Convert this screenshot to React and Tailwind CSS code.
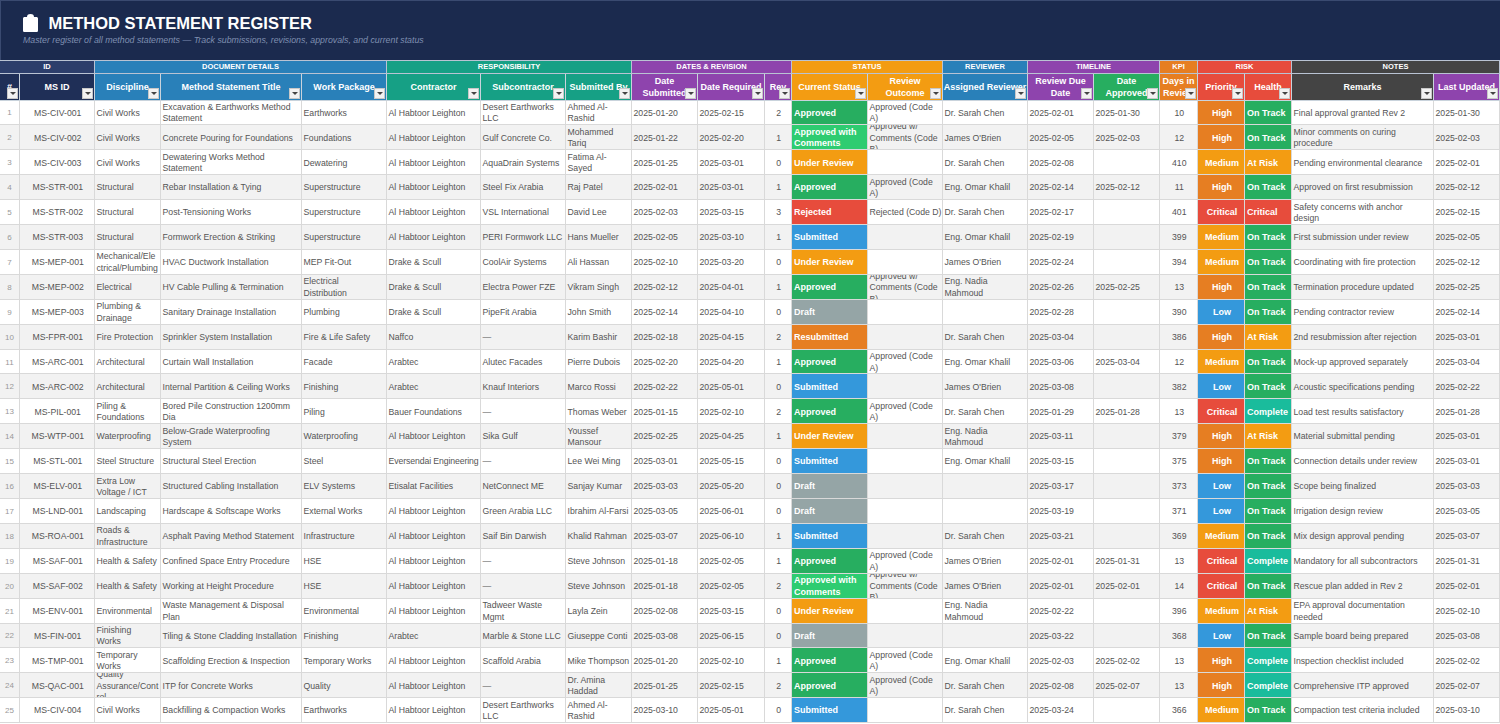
import React from "react";

const AH = "Al Habtoor Leighton";
const A = "Approved (Code A)";
const B = "Approved w/ Comments (Code B)";

const groups = [
  ["ID", "col-span-2 bg-[#2c3e6b]"],
  ["DOCUMENT DETAILS", "col-span-3 bg-[#2980b9]"],
  ["RESPONSIBILITY", "col-span-3 bg-[#16a085]"],
  ["DATES & REVISION", "col-span-3 bg-[#8e44ad]"],
  ["STATUS", "col-span-2 bg-[#f39c12]"],
  ["REVIEWER", "col-span-1 bg-[#2980b9]"],
  ["TIMELINE", "col-span-2 bg-[#8e44ad]"],
  ["KPI", "col-span-1 bg-[#e67e22]"],
  ["RISK", "col-span-2 bg-[#e74c3c]"],
  ["NOTES", "col-span-2 bg-[#444444]"],
];

const headers = [
  ["#", "bg-[#1f2f57]"],
  ["MS ID", "bg-[#1f2f57]"],
  ["Discipline", "bg-[#2980b9]"],
  ["Method Statement Title", "bg-[#2980b9]"],
  ["Work Package", "bg-[#2980b9]"],
  ["Contractor", "bg-[#16a085]"],
  ["Subcontractor", "bg-[#16a085]"],
  ["Submitted By", "bg-[#16a085]"],
  ["Date Submitted", "bg-[#8e44ad]"],
  ["Date Required", "bg-[#8e44ad]"],
  ["Rev", "bg-[#8e44ad]"],
  ["Current Status", "bg-[#f39c12]"],
  ["Review\nOutcome", "bg-[#f39c12]"],
  ["Assigned Reviewer", "bg-[#2980b9]"],
  ["Review Due Date", "bg-[#8e44ad]"],
  ["Date\nApproved", "bg-[#27ae60]"],
  ["Days in Review", "bg-[#e67e22]"],
  ["Priority", "bg-[#e74c3c]"],
  ["Health", "bg-[#e74c3c]"],
  ["Remarks", "bg-[#444444]"],
  ["Last Updated", "bg-[#8e44ad]"],
];

const fills = {
  Approved: "bg-[#27ae60]",
  "Approved with Comments": "bg-[#2ecc71]",
  "Under Review": "bg-[#f39c12]",
  Rejected: "bg-[#e74c3c]",
  Submitted: "bg-[#3498db]",
  Draft: "bg-[#95a5a6]",
  Resubmitted: "bg-[#e67e22]",
  Critical: "bg-[#e74c3c]",
  High: "bg-[#e67e22]",
  Medium: "bg-[#f39c12]",
  Low: "bg-[#3498db]",
  "On Track": "bg-[#27ae60]",
  "At Risk": "bg-[#f39c12]",
  Complete: "bg-[#1abc9c]",
};

const rows = [
  ["MS-CIV-001", "Civil Works", "Excavation & Earthworks Method Statement", "Earthworks", AH, "Desert Earthworks LLC", "Ahmed Al-Rashid", "2025-01-20", "2025-02-15", "2", "Approved", A, "Dr. Sarah Chen", "2025-02-01", "2025-01-30", "10", "High", "On Track", "Final approval granted Rev 2", "2025-01-30"],
  ["MS-CIV-002", "Civil Works", "Concrete Pouring for Foundations", "Foundations", AH, "Gulf Concrete Co.", "Mohammed Tariq", "2025-01-22", "2025-02-20", "1", "Approved with Comments", B, "James O'Brien", "2025-02-05", "2025-02-03", "12", "High", "On Track", "Minor comments on curing procedure", "2025-02-03"],
  ["MS-CIV-003", "Civil Works", "Dewatering Works Method Statement", "Dewatering", AH, "AquaDrain Systems", "Fatima Al-Sayed", "2025-01-25", "2025-03-01", "0", "Under Review", "", "Dr. Sarah Chen", "2025-02-08", "", "410", "Medium", "At Risk", "Pending environmental clearance", "2025-02-01"],
  ["MS-STR-001", "Structural", "Rebar Installation & Tying", "Superstructure", AH, "Steel Fix Arabia", "Raj Patel", "2025-02-01", "2025-03-01", "1", "Approved", A, "Eng. Omar Khalil", "2025-02-14", "2025-02-12", "11", "High", "On Track", "Approved on first resubmission", "2025-02-12"],
  ["MS-STR-002", "Structural", "Post-Tensioning Works", "Superstructure", AH, "VSL International", "David Lee", "2025-02-03", "2025-03-15", "3", "Rejected", "Rejected (Code D)", "Dr. Sarah Chen", "2025-02-17", "", "401", "Critical", "Critical", "Safety concerns with anchor\ndesign", "2025-02-15"],
  ["MS-STR-003", "Structural", "Formwork Erection & Striking", "Superstructure", AH, "PERI Formwork LLC", "Hans Mueller", "2025-02-05", "2025-03-10", "1", "Submitted", "", "Eng. Omar Khalil", "2025-02-19", "", "399", "Medium", "On Track", "First submission under review", "2025-02-05"],
  ["MS-MEP-001", "Mechanical/Ele\nctrical/Plumbing", "HVAC Ductwork Installation", "MEP Fit-Out", "Drake & Scull", "CoolAir Systems", "Ali Hassan", "2025-02-10", "2025-03-20", "0", "Under Review", "", "James O'Brien", "2025-02-24", "", "394", "Medium", "On Track", "Coordinating with fire protection", "2025-02-12"],
  ["MS-MEP-002", "Electrical", "HV Cable Pulling & Termination", "Electrical\nDistribution", "Drake & Scull", "Electra Power FZE", "Vikram Singh", "2025-02-12", "2025-04-01", "1", "Approved", B, "Eng. Nadia Mahmoud", "2025-02-26", "2025-02-25", "13", "High", "On Track", "Termination procedure updated", "2025-02-25"],
  ["MS-MEP-003", "Plumbing & Drainage", "Sanitary Drainage Installation", "Plumbing", "Drake & Scull", "PipeFit Arabia", "John Smith", "2025-02-14", "2025-04-10", "0", "Draft", "", "", "2025-02-28", "", "390", "Low", "On Track", "Pending contractor review", "2025-02-14"],
  ["MS-FPR-001", "Fire Protection", "Sprinkler System Installation", "Fire & Life Safety", "Naffco", "—", "Karim Bashir", "2025-02-18", "2025-04-15", "2", "Resubmitted", "", "Dr. Sarah Chen", "2025-03-04", "", "386", "High", "At Risk", "2nd resubmission after rejection", "2025-03-01"],
  ["MS-ARC-001", "Architectural", "Curtain Wall Installation", "Facade", "Arabtec", "Alutec Facades", "Pierre Dubois", "2025-02-20", "2025-04-20", "1", "Approved", A, "Eng. Omar Khalil", "2025-03-06", "2025-03-04", "12", "Medium", "On Track", "Mock-up approved separately", "2025-03-04"],
  ["MS-ARC-002", "Architectural", "Internal Partition & Ceiling Works", "Finishing", "Arabtec", "Knauf Interiors", "Marco Rossi", "2025-02-22", "2025-05-01", "0", "Submitted", "", "James O'Brien", "2025-03-08", "", "382", "Low", "On Track", "Acoustic specifications pending", "2025-02-22"],
  ["MS-PIL-001", "Piling & Foundations", "Bored Pile Construction 1200mm Dia", "Piling", "Bauer Foundations", "—", "Thomas Weber", "2025-01-15", "2025-02-10", "2", "Approved", A, "Dr. Sarah Chen", "2025-01-29", "2025-01-28", "13", "Critical", "Complete", "Load test results satisfactory", "2025-01-28"],
  ["MS-WTP-001", "Waterproofing", "Below-Grade Waterproofing System", "Waterproofing", AH, "Sika Gulf", "Youssef Mansour", "2025-02-25", "2025-04-25", "1", "Under Review", "", "Eng. Nadia Mahmoud", "2025-03-11", "", "379", "High", "At Risk", "Material submittal pending", "2025-03-01"],
  ["MS-STL-001", "Steel Structure", "Structural Steel Erection", "Steel", "Eversendai\u00a0Engineering", "—", "Lee Wei Ming", "2025-03-01", "2025-05-15", "0", "Submitted", "", "Eng. Omar Khalil", "2025-03-15", "", "375", "High", "On Track", "Connection details under review", "2025-03-01"],
  ["MS-ELV-001", "Extra Low Voltage / ICT", "Structured Cabling Installation", "ELV Systems", "Etisalat Facilities", "NetConnect ME", "Sanjay Kumar", "2025-03-03", "2025-05-20", "0", "Draft", "", "", "2025-03-17", "", "373", "Low", "On Track", "Scope being finalized", "2025-03-03"],
  ["MS-LND-001", "Landscaping", "Hardscape & Softscape Works", "External Works", AH, "Green Arabia LLC", "Ibrahim Al-Farsi", "2025-03-05", "2025-06-01", "0", "Draft", "", "", "2025-03-19", "", "371", "Low", "On Track", "Irrigation design review", "2025-03-05"],
  ["MS-ROA-001", "Roads & Infrastructure", "Asphalt Paving Method Statement", "Infrastructure", AH, "Saif Bin Darwish", "Khalid Rahman", "2025-03-07", "2025-06-10", "1", "Submitted", "", "Dr. Sarah Chen", "2025-03-21", "", "369", "Medium", "On Track", "Mix design approval pending", "2025-03-07"],
  ["MS-SAF-001", "Health & Safety", "Confined Space Entry Procedure", "HSE", AH, "—", "Steve Johnson", "2025-01-18", "2025-02-05", "1", "Approved", A, "James O'Brien", "2025-02-01", "2025-01-31", "13", "Critical", "Complete", "Mandatory for all subcontractors", "2025-01-31"],
  ["MS-SAF-002", "Health & Safety", "Working at Height Procedure", "HSE", AH, "—", "Steve Johnson", "2025-01-18", "2025-02-05", "2", "Approved with Comments", B, "James O'Brien", "2025-02-01", "2025-02-01", "14", "Critical", "On Track", "Rescue plan added in Rev 2", "2025-02-01"],
  ["MS-ENV-001", "Environmental", "Waste Management & Disposal Plan", "Environmental", AH, "Tadweer Waste Mgmt", "Layla Zein", "2025-02-08", "2025-03-15", "0", "Under Review", "", "Eng. Nadia Mahmoud", "2025-02-22", "", "396", "Medium", "At Risk", "EPA approval documentation needed", "2025-02-10"],
  ["MS-FIN-001", "Finishing\nWorks", "Tiling & Stone Cladding Installation", "Finishing", "Arabtec", "Marble & Stone LLC", "Giuseppe Conti", "2025-03-08", "2025-06-15", "0", "Draft", "", "", "2025-03-22", "", "368", "Low", "On Track", "Sample board being prepared", "2025-03-08"],
  ["MS-TMP-001", "Temporary Works", "Scaffolding Erection & Inspection", "Temporary Works", AH, "Scaffold Arabia", "Mike Thompson", "2025-01-20", "2025-02-10", "1", "Approved", A, "Eng. Omar Khalil", "2025-02-03", "2025-02-02", "13", "High", "Complete", "Inspection checklist included", "2025-02-02"],
  ["MS-QAC-001", "Quality Assurance/Control", "ITP for Concrete Works", "Quality", AH, "—", "Dr. Amina Haddad", "2025-01-25", "2025-02-15", "2", "Approved", A, "Dr. Sarah Chen", "2025-02-08", "2025-02-07", "13", "High", "Complete", "Comprehensive ITP approved", "2025-02-07"],
  ["MS-CIV-004", "Civil Works", "Backfilling & Compaction Works", "Earthworks", AH, "Desert Earthworks LLC", "Ahmed Al-Rashid", "2025-03-10", "2025-05-01", "0", "Submitted", "", "Dr. Sarah Chen", "2025-03-24", "", "366", "Medium", "On Track", "Compaction test criteria included", "2025-03-10"],
];

// column index in a row (without the # cell)
const CENTERED = [0, 9, 15];
const STATUS = 10;
const PRIORITY = 16;
const HEALTH = 17;

const FilterButton = () => (
  <span className="absolute right-[1px] bottom-[1px] w-[11px] h-[11px] bg-[#f2f2f2] border border-[#c8c8c8] flex items-center justify-center">
    <svg width="6" height="3" viewBox="0 0 6 3">
      <path d="M0 0h6L3 3z" fill="#444444" />
    </svg>
  </span>
);

const Cell = ({ value, col, odd }) => {
  const filled = col === STATUS || col === PRIORITY || col === HEALTH;
  if (filled) {
    return (
      <div className={`flex items-center overflow-hidden border-r border-b border-[#d9d9d9] pl-[2px] pt-[2px] font-bold text-white leading-[11.5px] text-[9px] ${fills[value]} ${col === PRIORITY ? "justify-center text-center pl-0" : ""}`}>
        <span>{value}</span>
      </div>
    );
  }
  return (
    <div className={`flex items-center overflow-hidden border-r border-b border-[#d9d9d9] pl-[1.5px] pt-[2px] text-[#555555] leading-[11.5px] text-[8.7px] whitespace-pre-line [overflow-wrap:anywhere] ${odd ? "bg-white" : "bg-[#f2f2f2]"} ${CENTERED.includes(col) ? "justify-center text-center" : ""} ${value.includes("\u00a0") ? "tracking-[-0.1px]" : ""}`}>
      <span>{value}</span>
    </div>
  );
};

const App = () => {
  return (
    <div className="h-[724px] w-[1500px] overflow-hidden bg-white font-['Liberation_Sans',Arial,sans-serif]">
      {/* Title banner */}
      <div className="h-[60px] bg-[#1b2a4e] pl-[22px] pt-[11px] border-t border-l border-[#3a4a70]">
        <div className="flex items-center gap-[10.5px] h-[22px]">
          <svg width="15" height="18" viewBox="0 0 15 18">
            <path d="M4 3C4 1 5 0 7.500 0S11 1 11 3h2.400C14.300 3 15 3.700 15 4.600v11.800c0 .9-.7 1.600-1.600 1.600H1.600C.7 18 0 17.300 0 16.400V4.600C0 3.700.7 3 1.600 3z" fill="#ffffff" />
          </svg>
          <h1 className="text-[16.5px] leading-[22px] font-bold text-white">METHOD STATEMENT REGISTER</h1>
        </div>
        <p className="text-[8.8px] leading-[12px] italic text-[#7f8fb0]">
          Master register of all method statements — Track submissions, revisions, approvals, and current status
        </p>
      </div>

      {/* Register sheet */}
      <div className="grid grid-cols-[20px_75px_66px_141px_85px_94px_85px_66px_66px_67px_27px_76px_75px_85px_66px_66px_38px_47px_47px_142px_66px] grid-rows-[13.5px_27px_repeat(25,24.92px)]">
        {groups.map(([label, cls]) => (
          <div key={label} className={`flex items-center justify-center overflow-hidden border-r border-t border-b border-[#b9c3d3] text-white font-bold text-[7.5px] leading-none ${cls}`}>
            {label}
          </div>
        ))}
        {headers.map(([label, cls]) => (
          <div key={label} className={`relative flex items-center justify-center overflow-hidden border-r border-b border-[#c9d3dc] pt-[2px] text-center font-bold text-white text-[9px] leading-[11.5px] whitespace-pre-line ${cls}`}>
            <span className="break-words">{label}</span>
            <FilterButton />
          </div>
        ))}
        {rows.map((row, i) => (
          <React.Fragment key={row[0]}>
            <div className={`flex items-center justify-center border-r border-b border-[#d9d9d9] pt-[2px] text-[#999999] text-[8px] ${i % 2 === 0 ? "bg-white" : "bg-[#f2f2f2]"}`}>
              {i + 1}
            </div>
            {row.map((value, col) => (
              <Cell key={col} value={value} col={col} odd={i % 2 === 0} />
            ))}
          </React.Fragment>
        ))}
      </div>
    </div>
  );
};

export default App;
